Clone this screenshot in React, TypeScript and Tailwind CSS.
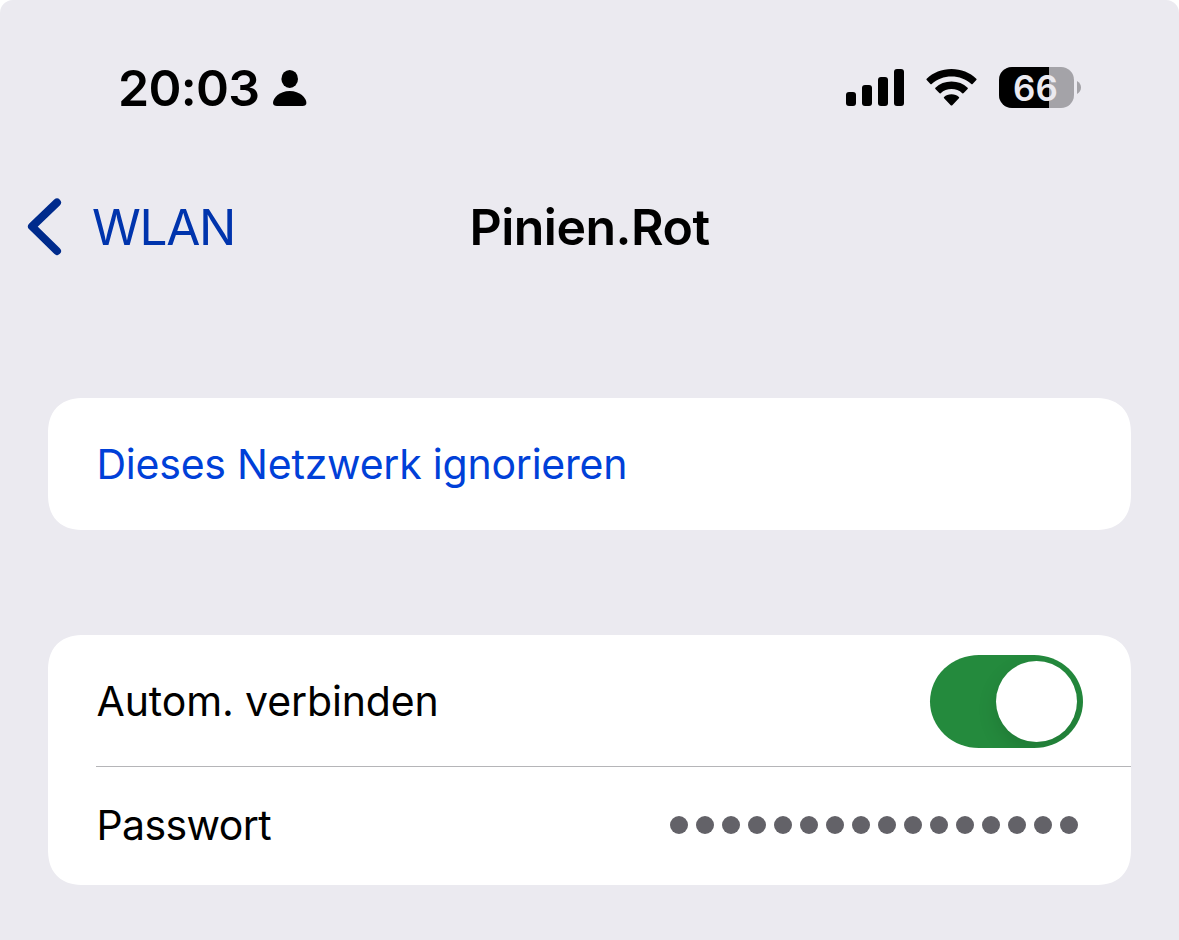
import React from 'react';

interface RowProps {
  label: string;
  className?: string;
  labelClassName?: string;
  children?: React.ReactNode;
}

const PASSWORD_LENGTH = 16;

const PersonIcon: React.FC = () => (
  <svg width="34" height="37" viewBox="0 -0.8 34 37" fill="currentColor">
    <ellipse cx="16.7" cy="9.1" rx="8.3" ry="9" />
    <path d="M4 36.2C1.6 36.2 0 35.200 0 33.300C0 28 6.500 21.200 16.700 21.200C26.900 21.200 33.400 28 33.400 33.300C33.400 35.200 31.800 36.2 29.400 36.2Z" />
  </svg>
);

const SignalIcon: React.FC = () => (
  <svg width="58" height="39" viewBox="0 0 58 39" fill="currentColor">
    <rect x="0" y="24" width="10" height="14" rx="3" />
    <rect x="16" y="17" width="10" height="21" rx="3" />
    <rect x="32" y="9" width="10" height="29" rx="3" />
    <rect x="48" y="1" width="10" height="37" rx="3" />
  </svg>
);

const WifiIcon: React.FC = () => (
  <svg width="51" height="39" viewBox="0 -0.8 51 39" fill="currentColor">
    <path d="M25.500 0.300C35.200 0.300 43.900 3.900 50.300 9.900Q51 10.600 50.300 11.300L46.600 15.100Q46 15.700 45.300 15.100C39.900 10.200 33.100 7.600 25.500 7.600C17.900 7.600 11.100 10.200 5.700 15.100Q5 15.700 4.400 15.100L0.700 11.300Q0 10.600 0.700 9.900C7.100 3.900 15.800 0.300 25.500 0.300Z" />
    <path d="M25.500 12.800C31.900 12.800 37.300 15 41.600 18.900Q42.200 19.500 41.600 20.200L37.700 24.300Q37 25 36.300 24.400C33.300 21.600 29.600 20.200 25.500 20.200C21.400 20.200 17.700 21.600 14.700 24.400Q14 25 13.300 24.300L9.400 20.200Q8.800 19.500 9.400 18.900C13.700 15 19.100 12.800 25.500 12.800Z" />
    <path d="M25.500 25.500C28.600 25.500 31 26.500 32.900 28.100Q33.600 28.800 32.900 29.500L26.300 36.400Q25.500 37.200 24.700 36.400L18.100 29.500Q17.400 28.800 18.100 28.100C20 26.500 22.400 25.500 25.500 25.500Z" />
  </svg>
);

const Battery: React.FC<{ level: number }> = ({ level }) => (
  <div className="flex items-center gap-[3px]">
    <div className="relative flex h-[41px] w-[75px] items-center justify-center overflow-hidden rounded-[13px] bg-[#a4a3a8]">
      <div className="absolute inset-y-0 left-0 bg-black" style={{ width: `${level}%` }} />
      <span className="relative pt-0.5 pr-0.5 text-[35px] leading-none font-semibold text-[#ebeaf0]">
        {level}
      </span>
    </div>
    <svg width="4" height="13" viewBox="0 0 4 13" fill="#a4a3a8">
      <path d="M0 0C2.500 1.200 4 3.700 4 6.500C4 9.300 2.500 11.800 0 13Z" />
    </svg>
  </div>
);

const Card: React.FC<{ className?: string; children: React.ReactNode }> = ({ className = '', children }) => (
  <section
    className={`mx-12 overflow-hidden rounded-[36px] bg-white [corner-shape:superellipse(1.25)] ${className}`}
  >
    {children}
  </section>
);

const Row: React.FC<RowProps> = ({ label, className = '', labelClassName = '', children }) => (
  <div className={`ml-12 flex items-center justify-between pr-12 ${className}`}>
    <span className={`pl-[0.5px] text-[41px] leading-[50px] whitespace-nowrap ${labelClassName}`}>{label}</span>
    {children}
  </div>
);

const Toggle: React.FC = () => (
  <button
    role="switch"
    aria-checked="true"
    className="mt-px flex h-[93px] w-[153px] items-center justify-end overflow-hidden rounded-[49px/46.5px] bg-[#248a3d] pr-1.5"
  >
    <span className="size-[81px] rounded-full bg-white shadow-[0_8px_20px_rgba(0,0,0,0.12)]" />
  </button>
);

export default function App() {
  return (
    <div className="h-[940px] w-[1179px] overflow-hidden rounded-t-[13px] bg-[#ebeaf0] font-['Inter',sans-serif] text-black">
      <header className="flex h-[175px] items-center justify-between pr-[98px] pl-[118px]">
        <div className="flex items-center gap-[14px]">
          <span className="w-[141px] text-[50px] leading-[60px] font-semibold tracking-[-0.7px] whitespace-nowrap">
            20:03
          </span>
          <PersonIcon />
        </div>
        <div className="flex items-center">
          <SignalIcon />
          <div className="mr-[22px] ml-[22px]">
            <WifiIcon />
          </div>
          <Battery level={66} />
        </div>
      </header>

      <nav className="grid h-[104px] grid-cols-[1fr_auto_1fr] items-center">
        <a href="#" className="flex items-center gap-[30px] pl-[27px] text-[#0034ad]">
          <svg width="35" height="58" viewBox="0 0 35 58" fill="none" className="text-[#002b8c]">
            <path
              d="M30 4.500L5 28.500L30 53"
              stroke="currentColor"
              strokeWidth="8"
              strokeLinecap="round"
              strokeLinejoin="round"
            />
          </svg>
          <span className="text-[49.5px] leading-[60px] tracking-[-1.3px]">WLAN</span>
        </a>
        <h1 className="text-[50px] leading-[60px] font-semibold tracking-[-0.5px]">Pinien.Rot</h1>
      </nav>

      <main className="pt-[119px]">
        <Card>
          <Row
            label="Dieses Netzwerk ignorieren"
            className="h-[132px]"
            labelClassName="tracking-[-0.22px] text-[#0040d8]"
          />
        </Card>

        <Card className="mt-[105px]">
          <Row
            label="Autom. verbinden"
            className="h-[132px] border-b border-[#b5b5b8]"
            labelClassName="tracking-[-0.12px]"
          >
            <Toggle />
          </Row>
          <Row label="Passwort" className="h-[118px] pb-0.5" labelClassName="tracking-[-0.6px]">
            <div className="mr-[5px] flex gap-2">
              {Array.from({ length: PASSWORD_LENGTH }, (_, i) => (
                <span key={i} className="size-[18px] rounded-full bg-[#636268]" />
              ))}
            </div>
          </Row>
        </Card>
      </main>
    </div>
  );
}
